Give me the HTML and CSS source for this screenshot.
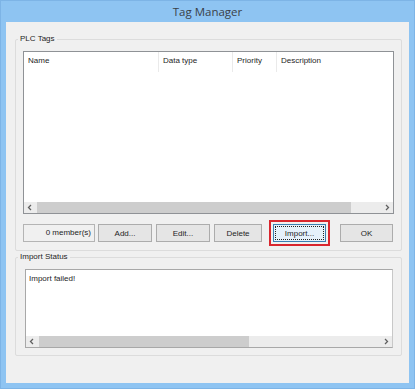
FILE: index.html
```html
<!DOCTYPE html>
<html lang="en">
<head>
    <meta charset="UTF-8">
    <meta name="viewport" content="width=device-width, initial-scale=1.0">
    <title>Tag Manager</title>
    <link rel="stylesheet" href="styles.css">
</head>
<body>
    <div class="window">
        <div class="titlebar">Tag Manager</div>
        <div class="client">
            <div class="group plc">
                <div class="group-label">PLC Tags</div>
                <div class="listview">
                    <div class="lv-header">
                        <div class="col col-name">Name</div>
                        <div class="col col-type">Data type</div>
                        <div class="col col-prio">Priority</div>
                        <div class="col col-desc">Description</div>
                    </div>
                    <div class="lv-body"></div>
                    <div class="hscroll">
                        <svg class="arrow" width="11" height="11" viewBox="0 0 11 11"><path d="M6.5 3 L4 5.5 L6.5 8" fill="none" stroke="#606060" stroke-width="1.3"/></svg>
                        <div class="track"><div class="thumb thumb-wide"></div></div>
                        <svg class="arrow" width="11" height="11" viewBox="0 0 11 11"><path d="M4.5 3 L7 5.5 L4.5 8" fill="none" stroke="#606060" stroke-width="1.3"/></svg>
                    </div>
                </div>
                <div class="actions">
                    <div class="members">0 member(s)</div>
                    <button class="btn btn-add">Add...</button>
                    <button class="btn btn-edit">Edit...</button>
                    <button class="btn btn-delete">Delete</button>
                    <button class="btn btn-import"><span class="focus">Import...</span></button>
                    <button class="btn btn-ok">OK</button>
                </div>
            </div>
            <div class="group status">
                <div class="group-label">Import Status</div>
                <div class="textbox">
                    <div class="tb-text">Import failed!</div>
                    <div class="hscroll">
                        <svg class="arrow" width="11" height="11" viewBox="0 0 11 11"><path d="M6.5 3 L4 5.5 L6.5 8" fill="none" stroke="#606060" stroke-width="1.3"/></svg>
                        <div class="track"><div class="thumb thumb-short"></div></div>
                        <svg class="arrow" width="11" height="11" viewBox="0 0 11 11"><path d="M4.5 3 L7 5.5 L4.5 8" fill="none" stroke="#606060" stroke-width="1.3"/></svg>
                    </div>
                </div>
            </div>
        </div>
    </div>
</body>
</html>
```

FILE: styles.css
```css
* {
    box-sizing: border-box;
}
body {
    margin: 0;
    font-family: "Liberation Sans", Arial, sans-serif;
    font-size: 8px;
    color: #1e1e1e;
    background: #ffffff;
}
.window {
    width: 415px;
    height: 389px;
    background: #8ec4f2;
    border: 1px solid #7db4e6;
    padding: 0 5px 5px 5px;
}
.titlebar {
    height: 21px;
    line-height: 22px;
    text-align: center;
    font-family: "Open Sans", sans-serif;
    font-size: 11.5px;
    color: #3a3f48;
}
.client {
    height: 361px;
    background: #f0f0f0;
    padding-top: 17px;
}
.group {
    margin-left: 9px;
    width: 387px;
    border: 1px solid #dcdcdc;
    border-radius: 2px;
}
.group-label {
    width: fit-content;
    margin-top: -6px;
    margin-left: 2px;
    padding: 0 2px;
    height: 10px;
    line-height: 10px;
    background: #f0f0f0;
}
.plc {
    height: 212px;
}
.listview {
    margin: 7px 0 0 7px;
    width: 371px;
    height: 163px;
    border: 1px solid #8f9296;
    background: #fff;
    display: flex;
    flex-direction: column;
}
.lv-header {
    height: 20px;
    display: flex;
    background: #fff;
}
.col {
    line-height: 18px;
    padding-left: 4px;
    border-right: 1px solid #eaeaea;
}
.col-name { width: 135px; }
.col-type { width: 74px; }
.col-prio { width: 44px; }
.col-desc { flex: 1; border-right: none; }
.lv-body {
    flex: 1;
}
.hscroll {
    height: 11px;
    display: flex;
    background: #ececec;
}
.arrow {
    flex: none;
    width: 12px;
    height: 11px;
}
.track {
    flex: 1;
    padding: 0 1px;
}
.thumb {
    height: 11px;
    background: #cdcdcd;
}
.thumb-wide { width: 314px; }
.thumb-short { width: 210px; }
.actions {
    display: flex;
    margin: 10px 0 0 7px;
    height: 18px;
}
.members {
    width: 72px;
    border: 1px solid #b4b4b4;
    text-align: right;
    padding-right: 3px;
    line-height: 16px;
    background: #f0f0f0;
}
.btn {
    font-family: inherit;
    font-size: 8px;
    color: #1e1e1e;
    height: 18px;
    padding: 0;
    border: 1px solid #acacac;
    background: #e5e5e5;
    border-radius: 0;
}
.btn-add { width: 54px; margin-left: 3px; }
.btn-edit { width: 54px; margin-left: 4px; }
.btn-delete { width: 48px; margin-left: 4px; }
.btn-import {
    width: 53px;
    margin-left: 11px;
    border-color: #3c7fb1;
    background: #e5f1fb;
    padding: 1px;
    outline: 2px solid #d9262e;
    outline-offset: 2px;
}
.focus {
    display: block;
    height: 100%;
    line-height: 14px;
    border: 1px dotted #222;
}
.btn-ok { width: 53px; margin-left: 14px; }
.status {
    margin-top: 6px;
    height: 99px;
}
.textbox {
    margin: 7px 0 0 9px;
    width: 368px;
    height: 79px;
    border: 1px solid #a8a8a8;
    border-right-color: #c8c8c8;
    background: #fff;
    display: flex;
    flex-direction: column;
}
.tb-text {
    flex: 1;
    padding: 4px 0 0 3px;
}
```
